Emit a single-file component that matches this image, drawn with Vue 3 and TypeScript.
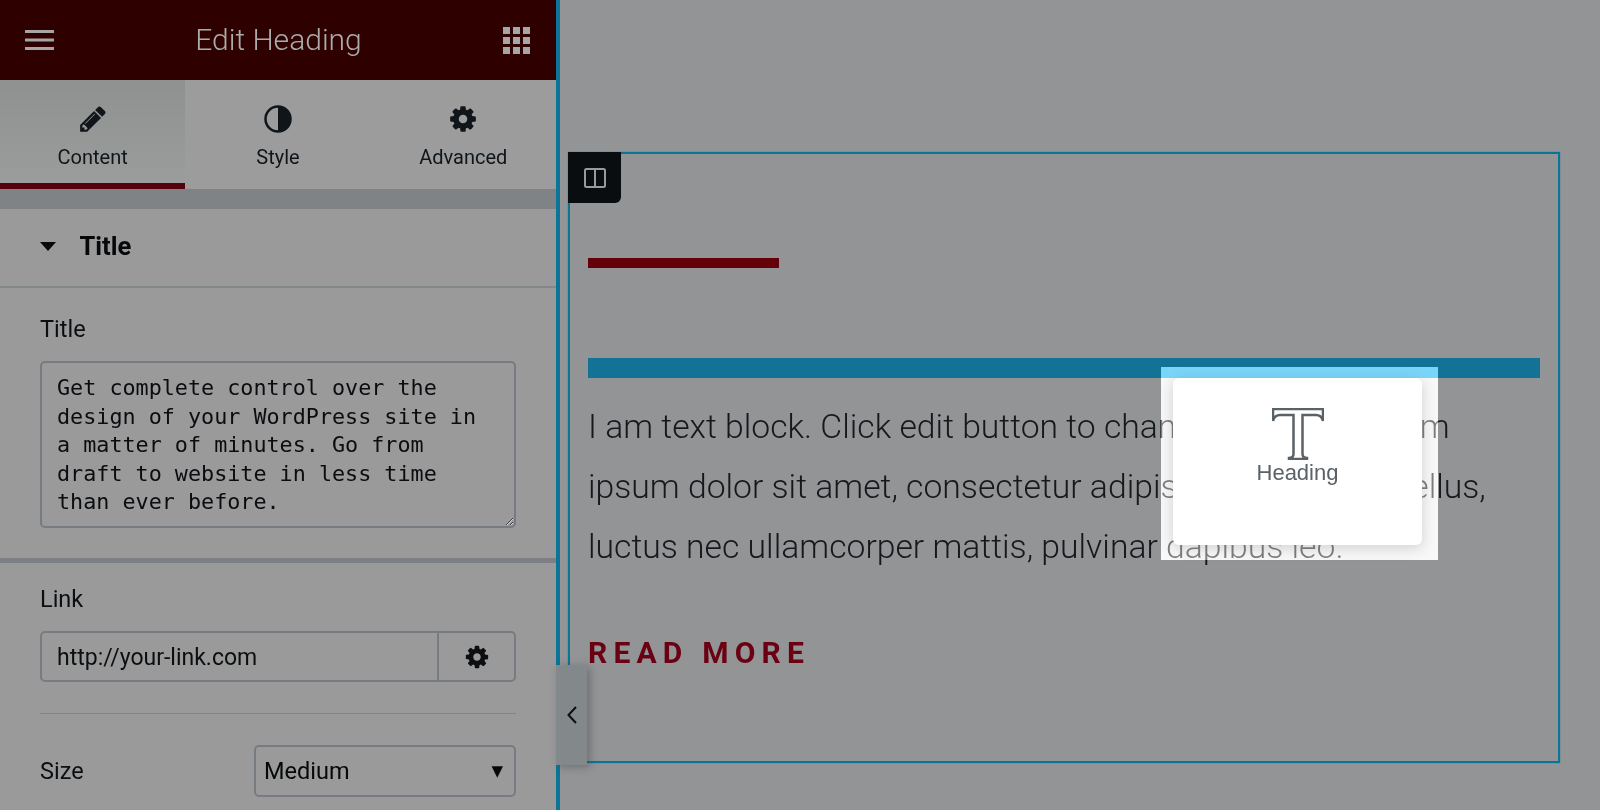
<script setup lang="ts">
const tabs = ['Content', 'Style', 'Advanced']
const titleText =
  'Get complete control over the design of your WordPress site in a matter of minutes. Go from draft to website in less time than ever before.'
const cog =
  'M1152 896q0-106-75-181t-181-75-181 75-75 181 75 181 181 75 181-75 75-181zm512-109v222q0 12-8 23t-20 13l-185 28q-19 54-39 91 35 50 107 138 10 12 10 25t-9 23q-27 37-99 108t-94 71q-12 0-26-9l-138-108q-44 23-91 38-16 136-29 186-7 28-36 28h-222q-14 0-24.5-8.5t-11.5-21.5l-28-184q-49-16-90-37l-141 107q-10 9-25 9-14 0-25-11-126-114-165-168-7-10-7-23 0-12 8-23 15-21 51-66.5t54-70.5q-27-50-41-99l-183-27q-13-2-21-12.5t-8-23.5v-222q0-12 8-23t19-13l186-28q14-46 39-92-40-57-107-138-10-12-10-24 0-10 9-23 26-36 98.5-107.5t94.5-71.5q13 0 26 10l138 107q44-23 91-38 16-136 29-186 7-28 36-28h222q14 0 24.5 8.5t11.5 21.5l28 184q49 16 90 37l142-107q9-9 24-9 13 0 25 10 129 119 165 170 7 8 7 22 0 12-8 23-15 21-51 66.5t-54 70.5q26 50 41 98l183 28q13 2 21 12.5t8 23.5z'
const pencil =
  'M491 1536l91-91-235-235-91 91v107h128v128h107zm523-928q0-22-22-22-10 0-17 7l-542 542q-7 7-7 17 0 22 22 22 10 0 17-7l542-542q7-7 7-17zm-54-192l416 416-832 832h-416v-416zm683 96q0 53-37 90l-166 166-416-416 166-165q36-38 90-38 53 0 91 38l235 234q37 39 37 91z'
const gridCells = Array.from({ length: 9 }, (_, i) => i)
</script>

<template>
  <div class="page">
    <aside class="panel">
      <header class="panel-head">
        <svg class="burger" viewBox="0 0 29 20" aria-hidden="true">
          <rect x="0" y="0" width="29" height="3" />
          <rect x="0" y="8.5" width="29" height="3" />
          <rect x="0" y="17" width="29" height="3" />
        </svg>
        <h1 class="head-title">Edit Heading</h1>
        <div class="grid-icon" aria-hidden="true">
          <span v-for="c in gridCells" :key="c"></span>
        </div>
      </header>

      <nav class="tabs">
        <div v-for="(t, i) in tabs" :key="t" class="tab" :class="{ active: i === 0 }">
          <svg v-if="i === 0" class="tab-icon" viewBox="0 0 1792 1792" aria-hidden="true"><path :d="pencil" /></svg>
          <svg v-else-if="i === 1" class="tab-icon" viewBox="0 0 30 30" aria-hidden="true">
            <circle cx="15" cy="15" r="12.5" fill="none" stroke="currentColor" stroke-width="2.5" />
            <path d="M15 2.500a12.500 12.500 0 0 1 0 25z" />
          </svg>
          <svg v-else class="tab-icon" viewBox="0 0 1792 1792" aria-hidden="true"><path :d="cog" /></svg>
          <span class="tab-label">{{ t }}</span>
        </div>
      </nav>
      <div class="band"></div>

      <div class="section-head">
        <span class="caret"></span>
        <span class="section-title">Title</span>
      </div>

      <div class="control-title">
        <label class="label">Title</label>
        <textarea class="textarea" readonly :value="titleText"></textarea>
      </div>

      <div class="control-link">
        <label class="label">Link</label>
        <div class="link-field">
          <input class="link-input" readonly value="http://your-link.com" />
          <div class="link-btn">
            <svg viewBox="0 0 1792 1792" aria-hidden="true"><path :d="cog" /></svg>
          </div>
        </div>
        <div class="rule"></div>
        <div class="size-row">
          <label class="label">Size</label>
          <div class="select">
            <span>Medium</span>
            <span class="arrow">▼</span>
          </div>
        </div>
      </div>
    </aside>

    <main class="canvas">
      <section class="box">
        <div class="handle">
          <svg viewBox="0 0 22 20" aria-hidden="true">
            <rect x="1" y="1" width="20" height="18" rx="1.5" />
            <path d="M11 1v18" />
          </svg>
        </div>
        <div class="accent"></div>
        <div class="blue-bar"></div>
        <p class="body-text">
          I am text block. Click edit button to change this text. Lorem ipsum dolor sit amet, consectetur adipiscing elit. Ut elit tellus, luctus nec ullamcorper mattis, pulvinar dapibus leo.
        </p>
        <a class="read-more">READ MORE</a>
      </section>
    </main>

    <button class="toggle" aria-label="Collapse">
      <svg viewBox="0 0 12 20" aria-hidden="true"><path d="M10 2 2.500 10l7.500 8" /></svg>
    </button>

    <div class="ghost"></div>
    <div class="ghost-card">
      <svg class="t-icon" viewBox="0 0 52 52" aria-hidden="true">
        <path d="M1 1H51V13C50 9 48 7 44 7H30.500V46C30.500 49 32 50 35 50V51H17V50C20 50 21.500 49 21.500 46V7H8C4 7 2 9 1 13Z" />
      </svg>
      <span class="ghost-label">Heading</span>
    </div>
  </div>
</template>

<style>
html,
body {
  margin: 0;
  overflow: hidden;
}
</style>

<style scoped>
.page {
  position: relative;
  display: flex;
  width: 1600px;
  height: 810px;
  overflow: hidden;
  background: #939496;
  font-family: Roboto, sans-serif;
  color: #0c0f12;
}

.panel {
  flex: none;
  width: 556px;
  height: 810px;
  overflow: hidden;
  background: #9a9a9a;
}

.panel-head {
  display: flex;
  align-items: center;
  justify-content: space-between;
  height: 80px;
  padding: 0 26px 0 25px;
  box-sizing: border-box;
  background: #2e0000;
  color: #a3a3a3;
}

.burger {
  width: 29px;
  height: 20px;
  fill: #a6a6a6;
}

.head-title {
  margin: 0 0 1px;
  font-size: 30px;
  font-weight: 300;
  color: #acacac;
}

.grid-icon {
  display: grid;
  grid-template-columns: repeat(3, 7px);
  grid-auto-rows: 7px;
  gap: 3px;
}

.grid-icon span {
  background: #a6a6a6;
}

.tabs {
  display: grid;
  grid-template-columns: repeat(3, 1fr);
  height: 109px;
  background: #9c9c9c;
}

.tab {
  display: flex;
  flex-direction: column;
  align-items: center;
  box-sizing: border-box;
  padding-top: 24px;
  color: #10151a;
}

.tab.active {
  background: linear-gradient(#8f9190, #9b9d9c);
  border-bottom: 6px solid #54000f;
}

.tab-icon {
  width: 30px;
  height: 30px;
  fill: currentColor;
}

.tab-label {
  margin-top: 11px;
  font-size: 20px;
  line-height: 24px;
}

.band {
  height: 20px;
  background: #7f8386;
}

.section-head {
  display: flex;
  align-items: center;
  height: 79px;
  padding: 0 0 3px 39.500px;
  box-sizing: border-box;
  border-bottom: 2px solid #83888b;
}

.caret {
  width: 0;
  height: 0;
  border-left: 8px solid transparent;
  border-right: 8px solid transparent;
  border-top: 9px solid #06080a;
}

.section-title {
  margin-left: 24px;
  font-size: 25.500px;
  font-weight: 700;
  color: #06080a;
}

.control-title {
  height: 275px;
  box-sizing: border-box;
  padding: 27px 40px 0;
  border-bottom: 5px solid #7c8084;
}

.label {
  display: block;
  font-size: 23.500px;
  line-height: 28px;
  color: #0c0f12;
}

.textarea {
  display: block;
  width: 476px;
  height: 167px;
  margin-top: 18px;
  padding: 11px 15px;
  box-sizing: border-box;
  border: 2px solid #767c81;
  border-radius: 5px;
  outline: none;
  overflow: hidden;
  background: transparent;
  font-family: "DejaVu Sans Mono", monospace;
  font-size: 21.750px;
  line-height: 28.500px;
  color: #0a0c0f;
}

.control-link {
  padding: 22px 40px 0;
}

.link-field {
  display: flex;
  height: 51px;
  margin-top: 18px;
  box-sizing: border-box;
  border: 2px solid #767c81;
  border-radius: 5px;
}

.link-input {
  flex: 1;
  min-width: 0;
  padding: 2px 15px 0;
  border: 0;
  outline: none;
  background: transparent;
  font-family: Roboto, sans-serif;
  font-size: 23px;
  color: #0c0f12;
}

.link-btn {
  display: flex;
  align-items: center;
  justify-content: center;
  width: 75px;
  border-left: 2px solid #767c81;
}

.link-btn svg {
  width: 26px;
  height: 26px;
  fill: #0c0f12;
}

.rule {
  height: 1px;
  margin-top: 31px;
  background: #7f8488;
}

.size-row {
  display: flex;
  align-items: center;
  justify-content: space-between;
  margin-top: 31px;
}

.select {
  display: flex;
  align-items: center;
  justify-content: space-between;
  width: 262px;
  height: 52px;
  padding: 0 11px 0 8px;
  box-sizing: border-box;
  border: 2px solid #767c81;
  border-radius: 5px;
  font-size: 23.500px;
  color: #06080a;
}

.arrow {
  font-family: "DejaVu Sans", sans-serif;
  font-size: 15px;
}

.canvas {
  flex: 1;
  min-width: 0;
  border-left: 4px solid #0a7598;
  padding: 152px 40px 0 8px;
}

.box {
  position: relative;
  height: 611px;
  box-sizing: border-box;
  border: 2px solid #0a7598;
  box-shadow: 0 0 1px rgba(10, 117, 152, 0.8);
  padding: 0 18px;
}

.handle {
  position: absolute;
  top: -2px;
  left: -2px;
  display: flex;
  align-items: center;
  justify-content: center;
  width: 53px;
  height: 51px;
  border-radius: 0 0 6px 0;
  background: #0a0d10;
}

.handle svg {
  width: 22px;
  height: 20px;
  fill: none;
  stroke: #9a9a9a;
  stroke-width: 2;
}

.accent {
  width: 191px;
  height: 10px;
  margin-top: 104px;
  background: #640008;
}

.blue-bar {
  height: 20px;
  margin-top: 90px;
  background: #147296;
}

.body-text {
  margin: 19px 0 0;
  font-size: 33.700px;
  font-weight: 300;
  line-height: 60px;
  color: #16191c;
}

.read-more {
  display: block;
  margin-top: 58px;
  font-size: 30px;
  font-weight: 700;
  line-height: 36px;
  letter-spacing: 6.200px;
  color: #6a0012;
}

.toggle {
  position: absolute;
  left: 556px;
  top: 665px;
  display: flex;
  align-items: center;
  justify-content: center;
  width: 31px;
  height: 100px;
  padding: 0;
  border: 0;
  background: #83888b;
  box-shadow: 3px 2px 8px rgba(40, 44, 48, 0.35);
}

.toggle svg {
  width: 12px;
  height: 20px;
  fill: none;
  stroke: #0c0f12;
  stroke-width: 2;
}

.ghost {
  position: absolute;
  left: 1161px;
  top: 367px;
  width: 277px;
  height: 193px;
  background: #666462;
  mix-blend-mode: plus-lighter;
}

.ghost-card {
  position: absolute;
  left: 1173px;
  top: 378px;
  display: flex;
  flex-direction: column;
  align-items: center;
  width: 249px;
  height: 167px;
  padding-top: 30px;
  box-sizing: border-box;
  border-radius: 6px;
  background: #fff;
  box-shadow: 0 3px 14px rgba(60, 70, 80, 0.22);
}

.t-icon {
  width: 52px;
  height: 52px;
  fill: none;
  stroke: #5a6167;
  stroke-width: 2.500;
}

.ghost-label {
  margin-top: 0;
  font-family: "Liberation Sans", Arial, sans-serif;
  font-size: 22px;
  line-height: 26px;
  color: #5a6167;
}
</style>
